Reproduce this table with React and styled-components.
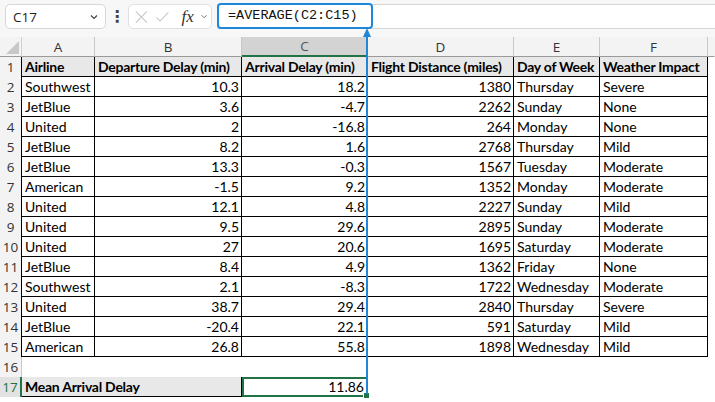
import React from 'react'
import styled, { createGlobalStyle } from 'styled-components'

const GlobalStyle = createGlobalStyle`
  body {
    margin: 0;
    background: #ffffff;
  }
`

const Page = styled.div`
  position: relative;
  width: 715px;
  height: 402px;
  overflow: hidden;
  background: #ffffff;
  font-family: Lato, "Liberation Sans", sans-serif;
`

const Toolbar = styled.div`
  display: flex;
  align-items: center;
  height: 37px;
  padding: 0 0 4px 5px;
  box-sizing: border-box;
  background: #f7f7f7;
`

const NameBox = styled.div`
  display: flex;
  align-items: center;
  justify-content: space-between;
  width: 101px;
  height: 25px;
  box-sizing: border-box;
  padding: 0 6px 0 7px;
  background: #ffffff;
  border: 1px solid #d6d6d6;
  border-radius: 5px;
  font-family: "Open Sans", sans-serif;
  font-size: 13.5px;
  color: #242424;
`

const Dots = styled.div`
  width: 22px;
  text-align: center;
  font-family: "DejaVu Sans", sans-serif;
  font-size: 16px;
  font-weight: bold;
  color: #444;
`

const FxBox = styled.div`
  display: flex;
  align-items: center;
  gap: 6px;
  width: 84px;
  height: 25px;
  box-sizing: border-box;
  padding: 0 3px 0 5px;
  background: #ffffff;
  border: 1px solid #e0e0e0;
  border-radius: 5px;
  margin-right: 5px;
`

const Fx = styled.span`
  font-family: "Liberation Serif", serif;
  font-style: italic;
  font-size: 17px;
  color: #333;
  margin-left: 6px;
`

const FormulaBar = styled.div`
  flex: 1;
  display: flex;
  align-items: center;
  height: 25px;
  box-sizing: border-box;
  background: #ffffff;
  border-top: 1px solid #d6d6d6;
  border-bottom: 1px solid #d6d6d6;
`

const Highlight = styled.div`
  display: flex;
  align-items: center;
  width: 156px;
  height: 26px;
  box-sizing: border-box;
  margin-top: -2px;
  padding-left: 9px;
  border: 2px solid #1f86d8;
  border-radius: 4px;
  font-family: "Liberation Mono", monospace;
  font-size: 13.5px;
  color: #111;
`

const Sheet = styled.div`
  display: grid;
  grid-template-columns: 22px 73px 147px 126px 146px 86px 108px 1fr;
  grid-auto-rows: 20px;
`

const Corner = styled.div`
  position: relative;
  background: #f3f3f3;
  border-right: 1px solid #d0d0d0;
  border-bottom: 1px solid #9a9a9a;
  box-sizing: border-box;

  &::after {
    content: '';
    position: absolute;
    right: 2px;
    bottom: 2px;
    border-left: 13px solid transparent;
    border-bottom: 13px solid #c8c8c8;
  }
`

const ColHead = styled.div`
  display: flex;
  align-items: center;
  justify-content: center;
  box-sizing: border-box;
  background: ${p => (p.$active ? '#d3d3d3' : '#f3f3f3')};
  border-right: 1px solid ${p => (p.$edge ? '#f3f3f3' : '#c8c8c8')};
  border-bottom: ${p => (p.$active ? '2px solid #217346' : '1px solid #9a9a9a')};
  font-family: "Open Sans", sans-serif;
  font-size: 13.5px;
  color: ${p => (p.$active ? '#555' : '#333')};
`

const RowHead = styled.div`
  display: flex;
  align-items: center;
  justify-content: center;
  box-sizing: border-box;
  background: ${p => (p.$active ? '#e2e2e2' : '#f3f3f3')};
  border-right: ${p => (p.$active ? '2px solid #217346' : `1px solid ${p.$line}`)};
  font-family: "Open Sans", sans-serif;
  font-size: 13.5px;
  color: ${p => (p.$active ? '#217346' : '#333')};
`

const Cell = styled.div`
  display: flex;
  align-items: flex-end;
  justify-content: ${p => (p.$num ? 'flex-end' : 'flex-start')};
  box-sizing: border-box;
  padding: 0 2px 1px 3px;
  grid-column: ${p => p.$span || 'auto'};
  background: ${p => (p.$head ? '#e8e8e8' : '#ffffff')};
  border-right: 1px solid ${p => p.$line || '#000'};
  border-bottom: 1px solid ${p => p.$line || '#000'};
  font-size: 14px;
  font-weight: ${p => (p.$head ? 700 : 400)};
  letter-spacing: ${p => (p.$head ? '-0.25px' : '0')};
  color: #000;
  white-space: nowrap;
  overflow: hidden;
`

const Blank = styled.div``

const Selected = styled.div`
  position: relative;
  display: flex;
  align-items: flex-end;
  justify-content: flex-end;
  box-sizing: border-box;
  padding: 0 2px 0 3px;
  border: 2px solid #217346;
  font-size: 14px;
  color: #000;

  &::after {
    content: '';
    position: absolute;
    right: -4px;
    bottom: -4px;
    width: 5px;
    height: 5px;
    background: #217346;
    border: 1px solid #fff;
  }
`

const Arrow = styled.svg`
  position: absolute;
  left: 362px;
  top: 28px;
`

const header = ['Airline', 'Departure Delay (min)', 'Arrival Delay (min)', 'Flight Distance (miles)', 'Day of Week', 'Weather Impact']

const rows = [
  ['Southwest', '10.3', '18.2', '1380', 'Thursday', 'Severe'],
  ['JetBlue', '3.6', '-4.7', '2262', 'Sunday', 'None'],
  ['United', '2', '-16.8', '264', 'Monday', 'None'],
  ['JetBlue', '8.2', '1.6', '2768', 'Thursday', 'Mild'],
  ['JetBlue', '13.3', '-0.3', '1567', 'Tuesday', 'Moderate'],
  ['American', '-1.5', '9.2', '1352', 'Monday', 'Moderate'],
  ['United', '12.1', '4.8', '2227', 'Sunday', 'Mild'],
  ['United', '9.5', '29.6', '2895', 'Sunday', 'Moderate'],
  ['United', '27', '20.6', '1695', 'Saturday', 'Moderate'],
  ['JetBlue', '8.4', '4.9', '1362', 'Friday', 'None'],
  ['Southwest', '2.1', '-8.3', '1722', 'Wednesday', 'Moderate'],
  ['United', '38.7', '29.4', '2840', 'Thursday', 'Severe'],
  ['JetBlue', '-20.4', '22.1', '591', 'Saturday', 'Mild'],
  ['American', '26.8', '55.8', '1898', 'Wednesday', 'Mild'],
]

const numCols = [1, 2, 3]

function Chevron({ size = 10, color = '#444' }) {
  return (
    <svg width={size} height={size} viewBox="0 0 10 10">
      <path d="M2 3.5 L5 6.5 L8 3.5" fill="none" stroke={color} strokeWidth="1.2" />
    </svg>
  )
}

export default function App() {
  return (
    <Page>
      <GlobalStyle />
      <Toolbar>
        <NameBox>
          <span>C17</span>
          <Chevron />
        </NameBox>
        <Dots>⋮</Dots>
        <FxBox>
          <svg width="16" height="16" viewBox="0 0 16 16">
            <path d="M2 2 L14 14 M14 2 L2 14" stroke="#c4c4c4" strokeWidth="1.1" />
          </svg>
          <svg width="16" height="16" viewBox="0 0 16 16">
            <path d="M1.5 8.5 L5.5 12.5 L14.5 3" fill="none" stroke="#c4c4c4" strokeWidth="1.1" />
          </svg>
          <Fx>fx</Fx>
          <Chevron size={9} color="#777" />
        </FxBox>
        <FormulaBar>
          <Highlight>=AVERAGE(C2:C15)</Highlight>
        </FormulaBar>
      </Toolbar>

      <Sheet>
        <Corner />
        {['A', 'B', 'C', 'D', 'E', 'F'].map(l => (
          <ColHead key={l} $active={l === 'C'}>{l}</ColHead>
        ))}
        <ColHead $edge />

        <RowHead $line="#000">1</RowHead>
        {header.map(h => (
          <Cell key={h} $head>{h}</Cell>
        ))}
        <Blank />

        {rows.map((r, i) => (
          <React.Fragment key={i}>
            <RowHead $line="#000">{i + 2}</RowHead>
            {r.map((v, j) => (
              <Cell key={j} $num={numCols.includes(j)}>{v}</Cell>
            ))}
            <Blank />
          </React.Fragment>
        ))}

        <RowHead $line="#c8c8c8">16</RowHead>
        <Cell $span="span 6" $line="transparent" />
        <Blank />

        <RowHead $active>17</RowHead>
        <Cell $span="span 2" $head>Mean Arrival Delay</Cell>
        <Selected>11.86</Selected>
      </Sheet>

      <Arrow width="10" height="370" viewBox="0 0 10 370">
        <path d="M5 8 L5 366" stroke="#1f86d8" strokeWidth="2" />
        <path d="M5 0 L9 9 L1 9 Z" fill="#1f86d8" />
      </Arrow>
    </Page>
  )
}
